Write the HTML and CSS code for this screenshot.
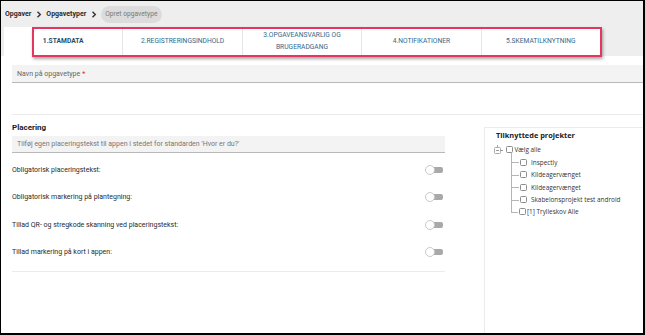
FILE: index.html
```html
<!DOCTYPE html>
<html lang="da">
<head>
<meta charset="utf-8">
<title>Opret opgavetype</title>
<link rel="stylesheet" href="styles.css">
</head>
<body>
<div class="frame">
  <div class="header">
    <nav class="breadcrumb">
      <span class="crumb">Opgaver</span>
      <svg class="chev" width="6" height="7" viewBox="0 0 6 7"><path d="M1.5 0.8 L4.3 3.5 L1.5 6.2" fill="none" stroke="#333" stroke-width="1.4"/></svg>
      <span class="crumb">Opgavetyper</span>
      <svg class="chev" width="6" height="7" viewBox="0 0 6 7"><path d="M1.5 0.8 L4.3 3.5 L1.5 6.2" fill="none" stroke="#333" stroke-width="1.4"/></svg>
      <span class="pill">Opret opgavetype</span>
    </nav>
    <div class="tabs">
      <div class="tab active">1.STAMDATA</div>
      <div class="tab">2.REGISTRERINGSINDHOLD</div>
      <div class="tab">3.OPGAVEANSVARLIG OG<br>BRUGERADGANG</div>
      <div class="tab">4.NOTIFIKATIONER</div>
      <div class="tab">5.SKEMATILKNYTNING</div>
    </div>
  </div>
  <div class="highlight"></div>
  <div class="content">
    <div class="field name-field">Navn på opgavetype <span class="req">*</span></div>
    <div class="divider"></div>
    <div class="main">
      <section class="left">
        <h2 class="section-title">Placering</h2>
        <div class="field place-field">Tilføj egen placeringstekst til appen i stedet for standarden 'Hvor er du?'</div>
        <div class="rows">
          <div class="row"><span>Obligatorisk placeringstekst:</span><span class="toggle"><span class="knob"></span><span class="track"></span></span></div>
          <div class="row"><span>Obligatorisk markering på plantegning:</span><span class="toggle"><span class="knob"></span><span class="track"></span></span></div>
          <div class="row"><span>Tillad QR- og stregkode skanning ved placeringstekst:</span><span class="toggle"><span class="knob"></span><span class="track"></span></span></div>
          <div class="row"><span>Tillad markering på kort i appen:</span><span class="toggle"><span class="knob"></span><span class="track"></span></span></div>
        </div>
        <div class="divider end"></div>
      </section>
      <aside class="panel">
        <h3 class="panel-title">Tilknyttede projekter</h3>
        <div class="tree">
          <div class="root">
            <svg class="minus" width="9" height="10" viewBox="0 0 9 10"><path d="M3.5 0 V2.5" stroke="#aaa" stroke-width="1"/><rect x="0.5" y="2.5" width="6" height="6" rx="1" fill="#fff" stroke="#aaa"/><path d="M2 5.5 H5 M6.5 5.5 H9" stroke="#999" stroke-width="1"/></svg>
            <span class="cb"></span><span class="tlabel">Vælg alle</span>
          </div>
          <ul class="children">
            <li><span class="cb"></span><span class="tlabel">Inspectly</span></li>
            <li><span class="cb"></span><span class="tlabel">Kildeagervænget</span></li>
            <li><span class="cb"></span><span class="tlabel">Kildeagervænget</span></li>
            <li><span class="cb"></span><span class="tlabel">Skabelonsprojekt test android</span></li>
            <li class="last"><span class="cb"></span><span class="tlabel tight">[1] Trylleskov Alle</span></li>
          </ul>
        </div>
      </aside>
    </div>
  </div>
</div>
</body>
</html>
```
FILE: styles.css
```css
* { box-sizing: border-box; }
html, body { margin: 0; padding: 0; background: #fff; }
body { font-family: Roboto, "Liberation Sans", sans-serif; color: #333; }

.frame {
  position: relative;
  width: 645px;
  height: 335px;
  border: 1px solid #000;
  border-right-width: 2px;
  border-bottom-width: 2px;
  display: flex;
  flex-direction: column;
  overflow: hidden;
  background: #fff;
}

.header { background: #eeeeee; }

.breadcrumb {
  height: 26px;
  display: flex;
  align-items: center;
  padding-left: 4px;
  font-size: 7px;
}
.crumb { font-weight: 700; color: #2b2b2b; }
.chev { margin: 0 4px 0 5px; }
.pill {
  background: #dcdcdc;
  color: #7a7a7a;
  border-radius: 9px;
  height: 17px;
  line-height: 17px;
  padding: 0 4px;
  font-size: 6.7px;
}

.tabs {
  margin-left: 3px;
  width: 596px;
  height: 29px;
  display: flex;
  background: #fff;
}
.tab {
  flex: 1;
  display: flex;
  align-items: center;
  justify-content: center;
  text-align: center;
  font-size: 6.7px;
  line-height: 11.5px;
  color: #36698a;
  border-left: 1px solid #e6e6e6;
}
.tab:first-child { border-left: none; }
.tab.active { font-weight: 700; color: #1e4d6d; }

.highlight {
  position: absolute;
  left: 31px;
  top: 26px;
  width: 570px;
  height: 30px;
  border: 2px solid #e5365f;
  box-shadow: 1px 2px 3px rgba(0,0,0,0.35);
  pointer-events: none;
}

.content {
  flex: 1;
  display: flex;
  flex-direction: column;
  background: #fff;
}

.field {
  background: #f3f3f3;
  border-bottom: 1px solid #b9b9b9;
  color: #666;
  font-size: 7px;
  padding-left: 5px;
  display: flex;
  align-items: center;
}
.name-field {
  margin: 9px 0 0 11px;
  height: 18px;
}
.req { color: #e0202a; margin-left: 2px; }

.divider {
  margin: 31px 0 0 11px;
  border-top: 1px solid #ececec;
}

.main {
  flex: 1;
  display: flex;
}

.left {
  width: 444px;
  padding-left: 11px;
}
.section-title {
  margin: 8px 0 0;
  font-size: 8px;
  line-height: 10px;
  font-weight: 700;
  color: #222;
}
.place-field {
  margin-top: 3px;
  height: 17px;
  color: #777;
}
.rows { margin-top: 3px; }
.row {
  height: 27.5px;
  display: flex;
  align-items: center;
  justify-content: space-between;
  font-size: 7px;
  color: #2a2a2a;
  padding-right: 2px;
}
.toggle {
  display: flex;
  align-items: center;
}
.knob {
  width: 10px;
  height: 10px;
  border-radius: 50%;
  border: 1px solid #c9c9c9;
  background: #fff;
  z-index: 1;
}
.track {
  width: 11px;
  height: 6px;
  margin-left: -3px;
  background: #a9a9a9;
  border-radius: 0 2px 2px 0;
}
.divider.end { margin: 5px 0 0; }

.panel {
  flex: 1;
  margin-left: 39px;
  margin-top: 12px;
  border-left: 1px solid #ececec;
  border-top: 1px solid #ececec;
  padding: 2px 0 0 11px;
  font-family: "Open Sans", "DejaVu Sans", sans-serif;
}
.panel-title {
  margin: 0;
  font-size: 7.4px;
  line-height: 10px;
  font-weight: 700;
  color: #222;
}
.tree {
  margin-top: 3.8px;
  font-size: 6.4px;
  color: #333;
}
.root {
  height: 12.4px;
  display: flex;
  align-items: center;
  margin-left: -2px;
}
.minus { margin-right: 3px; }
.cb {
  display: inline-block;
  width: 7px;
  height: 7px;
  border: 1px solid #8c8c8c;
  border-radius: 1.5px;
  background: #fff;
  flex: none;
}
.root .cb { margin-right: 1.5px; }
.children {
  list-style: none;
  margin: 0;
  padding: 0 0 0 15px;
}
.children li {
  position: relative;
  height: 12.4px;
  display: flex;
  align-items: center;
  padding-left: 9px;
}
.children li::before {
  content: "";
  position: absolute;
  left: 0;
  top: -3px;
  bottom: 0;
  border-left: 1px solid #b5b5b5;
}
.children li.last::before { bottom: 50%; }
.children li::after {
  content: "";
  position: absolute;
  left: 0;
  top: 50%;
  width: 8px;
  border-top: 1px solid #b5b5b5;
}
.children li.last::after { width: 7px; }
.children li .cb { margin-right: 4px; }
.children li.last .cb { margin-left: -1px; margin-right: 1px; }
```
